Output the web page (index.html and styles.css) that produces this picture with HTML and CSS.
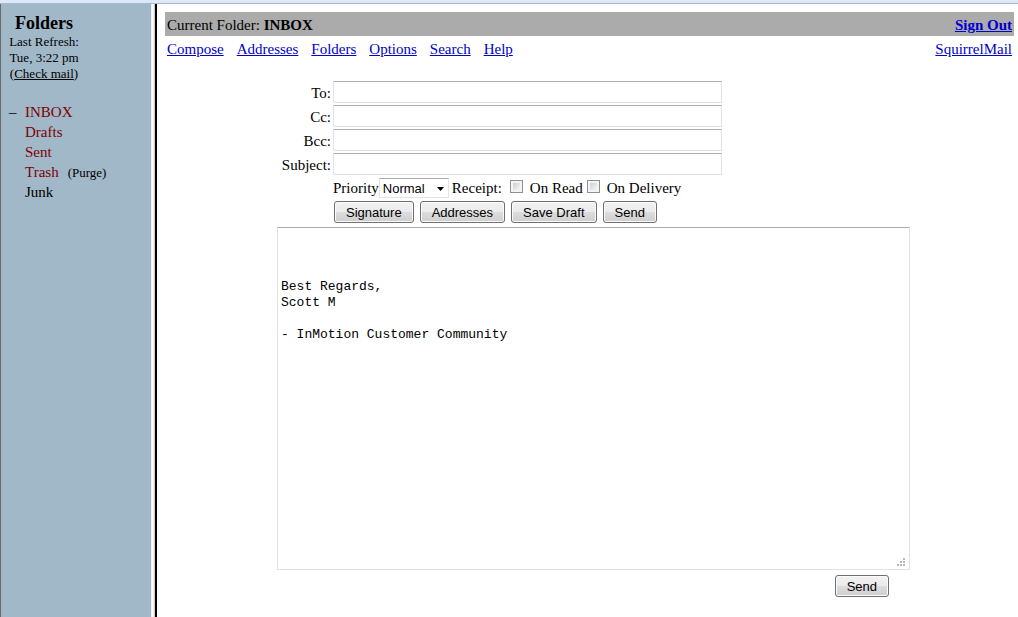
FILE: index.html
```html
<!DOCTYPE html>
<html lang="en">
<head>
<meta charset="utf-8">
<title>SquirrelMail</title>
<link rel="stylesheet" href="styles.css">
</head>
<body>
<div class="layout">
  <aside class="sidebar">
    <div class="summary">
      <h1 class="summary-title">Folders</h1>
      <div>Last Refresh:</div>
      <div>Tue, 3:22 pm</div>
      <div>(<a class="check" href="#">Check mail</a>)</div>
    </div>
    <ul class="folders">
      <li><a class="toggle" href="#">–</a><a class="special" href="#">INBOX</a></li>
      <li><a class="special" href="#">Drafts</a></li>
      <li><a class="special" href="#">Sent</a></li>
      <li><a class="special" href="#">Trash</a><span class="purge">(<a href="#">Purge</a>)</span></li>
      <li><a href="#">Junk</a></li>
    </ul>
  </aside>
  <div class="splitter"></div>
  <main class="main">
    <header class="current">
      <div>Current Folder: <b>INBOX</b></div>
      <a href="#"><b>Sign Out</b></a>
    </header>
    <nav class="menu">
      <div class="menu-links">
        <a href="#">Compose</a>
        <a href="#">Addresses</a>
        <a href="#">Folders</a>
        <a href="#">Options</a>
        <a href="#">Search</a>
        <a href="#">Help</a>
      </div>
      <a href="#">SquirrelMail</a>
    </nav>
    <form class="compose">
      <div class="fields">
        <label for="to">To:</label><input class="text" id="to" type="text">
        <label for="cc">Cc:</label><input class="text" id="cc" type="text">
        <label for="bcc">Bcc:</label><input class="text" id="bcc" type="text">
        <label for="subject">Subject:</label><input class="text" id="subject" type="text">
      </div>
      <div class="options">
        <label for="priority">Priority</label>
        <span class="picker">
          <select id="priority"><option>High</option><option selected>Normal</option><option>Low</option></select>
          <svg class="arrow" viewBox="0 0 7 4" aria-hidden="true"><path d="M0 0h7L3.500 4z"/></svg>
        </span>
        <span class="receipt">Receipt:</span>
        <label class="tick"><input type="checkbox">On Read</label>
        <label class="tick"><input type="checkbox">On Delivery</label>
      </div>
      <div class="buttons">
        <button type="button">Signature</button>
        <button type="button">Addresses</button>
        <button type="button">Save Draft</button>
        <button type="submit">Send</button>
      </div>
      <div class="body">
        <textarea aria-label="Message">



Best Regards,
Scott M

- InMotion Customer Community</textarea>
        <svg class="grip" viewBox="0 0 8 8" aria-hidden="true"><path d="M6 0h2v2H6zM3 3h2v2H3zM6 3h2v2H6zM0 6h2v2H0zM3 6h2v2H3zM6 6h2v2H6z"/></svg>
      </div>
      <div class="finish"><button type="submit">Send</button></div>
    </form>
  </main>
</div>
</body>
</html>
```
FILE: styles.css
```css
* {
  box-sizing: border-box;
}

body {
  margin: 0;
  min-height: 100vh;
  display: flex;
  flex-direction: column;
  border-top: 3px solid #dce9f7;
  background: #fff;
  color: #000;
  font: 15px/20px "Liberation Serif", "Times New Roman", serif;
}

a {
  color: #0000cc;
}

.layout {
  flex: 1;
  display: flex;
  border-top: 1px solid #a3bad5;
}

.sidebar {
  flex: 0 0 151px;
  padding: 9px 8px;
  border-left: 1px solid #696969;
  background: #a0b8c8;
}

.sidebar a {
  color: #000;
  text-decoration: none;
}

.summary {
  width: 70px;
  font-size: 13px;
  line-height: 16px;
  text-align: center;
  white-space: nowrap;
}

.summary-title {
  margin: 0;
  font-size: 18px;
  line-height: 21px;
}

.sidebar .check {
  text-decoration: underline;
}

.folders {
  margin: 20px 0 0;
  padding: 0 0 0 16px;
  list-style: none;
}

.folders li {
  height: 20px;
}

.sidebar .special {
  color: #7f0000;
}

.toggle {
  display: inline-block;
  width: 16px;
  margin-left: -16px;
}

.purge {
  margin-left: 9px;
  font-size: 13px;
}

.splitter {
  flex: 0 0 6px;
  border-right: 2px solid #000;
  background: linear-gradient(to right, #f0f0f0 0 1px, #fff 1px 2px, #f0f0f0 2px 3px, #d0d0d0 3px 4px);
}

.main {
  flex: 1;
  min-width: 0;
  padding: 8px 4px 8px 8px;
}

.current,
.menu {
  display: flex;
  justify-content: space-between;
  padding: 3px 2px 1px;
}

.current {
  background: #ababab;
}

.menu-links {
  display: flex;
  gap: 13px;
}

.compose {
  max-width: 641px;
  margin: 21px auto 0;
  padding-left: 8px;
}

.fields {
  display: grid;
  grid-template-columns: 54px minmax(0, 389px);
  gap: 2px;
}

.fields label {
  padding-top: 2px;
  text-align: right;
}

.text {
  width: 100%;
  height: 22px;
  padding: 2px 4px;
  border: 1px solid #e2e3ea;
  border-top-color: #abadb3;
  border-radius: 1px;
  background: #fff;
  font: 13px "Liberation Sans", Arial, sans-serif;
}

.options {
  display: flex;
  align-items: center;
  height: 20px;
  margin: 3px 0 3px 56px;
}

.picker {
  position: relative;
  margin-right: 3px;
}

.picker select {
  display: block;
  width: 70px;
  height: 20px;
  padding: 0 3px;
  appearance: none;
  border: 1px solid #e2e3ea;
  border-top-color: #abadb3;
  border-radius: 0;
  background: #fff;
  color: #000;
  font: 13px "Liberation Sans", Arial, sans-serif;
}

.arrow {
  position: absolute;
  top: 9px;
  right: 5px;
  width: 7px;
  height: 4px;
  pointer-events: none;
}

.receipt {
  margin-right: 8px;
}

.tick {
  display: flex;
  align-items: center;
  gap: 7px;
  margin-right: 4px;
}

.tick input {
  width: 13px;
  height: 13px;
  margin: 0 0 3px;
  padding: 2px;
  appearance: none;
  border: 1px solid #8e8f8f;
  background: linear-gradient(135deg, #cbcfd5, #f6f6f6) content-box, #f4f4f4;
}

.tick input:checked {
  background: #4b6a9b content-box;
}

button {
  height: 22px;
  padding: 0 11px;
  border: 1px solid #707070;
  border-radius: 3px;
  background: linear-gradient(#f2f2f2 0, #ebebeb 50%, #dddddd 50%, #cfcfcf 100%);
  box-shadow: inset 0 0 0 1px #fbfbfb;
  color: #000;
  font: 13px "Liberation Sans", Arial, sans-serif;
}

.buttons {
  display: flex;
  gap: 6px;
  margin: 0 0 4px 57px;
}

.body {
  position: relative;
}

.body textarea {
  display: block;
  width: 100%;
  height: 343px;
  padding: 3px;
  resize: none;
  border: 1px solid #e2e3ea;
  border-top-color: #abadb3;
  background: #fff;
  color: #000;
  font: 13px/16px "Liberation Mono", "Courier New", monospace;
}

.grip {
  position: absolute;
  right: 5px;
  bottom: 4px;
  width: 8px;
  height: 8px;
  fill: #b8b8b8;
  pointer-events: none;
}

.finish {
  display: flex;
  justify-content: flex-end;
  padding: 5px 21px 0 0;
}
```
